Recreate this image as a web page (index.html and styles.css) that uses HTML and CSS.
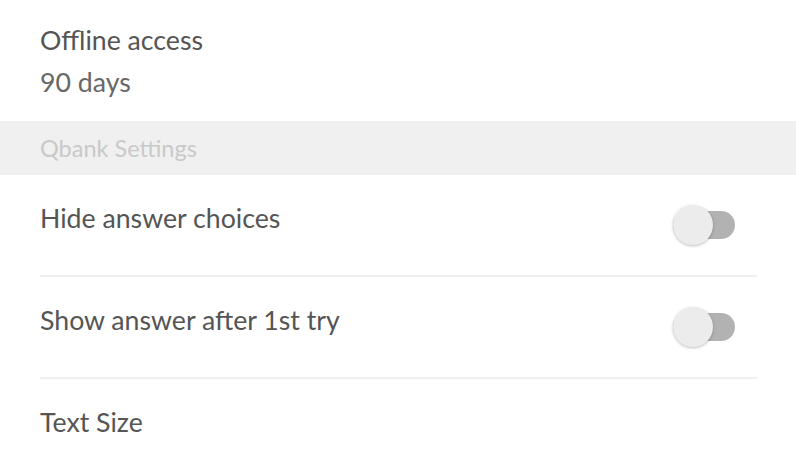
FILE: index.html
```html
<!DOCTYPE html>
<html>
<head>
<meta charset="utf-8">
<link rel="stylesheet" href="styles.css">
</head>
<body>
<div class="page">
  <div class="info">
    <div class="info-title">Offline access</div>
    <div class="info-value">90 days</div>
  </div>
  <div class="section-header">Qbank Settings</div>
  <div class="list">
    <div class="row">
      <span class="row-label">Hide answer choices</span>
      <span class="switch"><span class="track"></span><span class="thumb"></span></span>
    </div>
    <div class="row">
      <span class="row-label">Show answer after 1st try</span>
      <span class="switch"><span class="track"></span><span class="thumb"></span></span>
    </div>
    <div class="row last">
      <span class="row-label">Text Size</span>
    </div>
  </div>
</div>
</body>
</html>
```
FILE: styles.css
```css
html, body {
  margin: 0;
  padding: 0;
  background: #ffffff;
}
body {
  font-family: Lato, "Open Sans", sans-serif;
  color: #555555;
  width: 796px;
  height: 462px;
  overflow: hidden;
}
.info {
  padding: 24px 40px 0 40px;
  height: 121px;
  box-sizing: border-box;
}
.info-title {
  font-size: 26.7px;
  line-height: 32px;
  color: #555555;
}
.info-value {
  font-size: 26.7px;
  line-height: 32px;
  margin-top: 10px;
  color: #686868;
}
.section-header {
  background: #f0f0f0;
  height: 54px;
  padding: 0 40px;
  display: flex;
  align-items: center;
  font-size: 23.5px;
  color: #c9c9c9;
}
.list {
  padding: 0 39px 0 40px;
}
.row {
  height: 100px;
  display: flex;
  align-items: center;
  justify-content: space-between;
  border-bottom: 2px solid #f0f0f0;
}
.row.last {
  border-bottom: none;
}
.row-label {
  font-size: 26.7px;
  color: #555555;
  margin-bottom: 15px;
}
.switch {
  position: relative;
  width: 62px;
  height: 40px;
  margin-right: 22px;
}
.track {
  position: absolute;
  left: 0;
  right: 0;
  top: 6px;
  height: 28px;
  border-radius: 14px;
  background: #b2b2b2;
}
.thumb {
  position: absolute;
  left: 0;
  top: 0;
  width: 40px;
  height: 40px;
  border-radius: 50%;
  background: #ececec;
  box-shadow: 0 1px 3px rgba(0,0,0,0.25);
}
```
